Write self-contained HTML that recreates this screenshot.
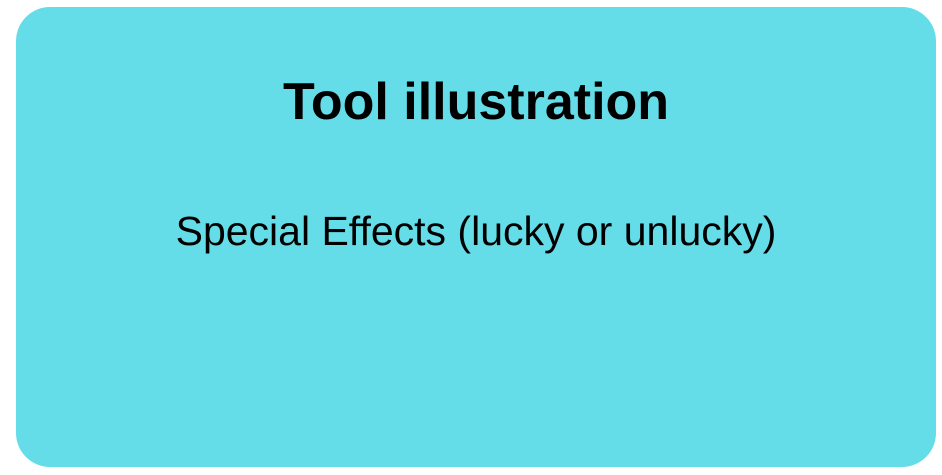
<!DOCTYPE html>
<html><head><style>
html,body{margin:0;padding:0;background:#fff;width:942px;height:475px;overflow:hidden}
.card{position:absolute;left:16px;top:7px;width:920px;height:460px;background:#65dde9;border-radius:34px;font-family:"Liberation Sans",sans-serif;color:#000}
h1{position:absolute;left:0;right:0;top:66px;margin:0;text-align:center;font-size:52px;font-weight:bold;line-height:58px}
p{position:absolute;left:0;right:0;top:201px;margin:0;text-align:center;font-size:41px;line-height:46px}
</style></head><body>
<div class="card"><h1>Tool illustration</h1><p>Special Effects (lucky or unlucky)</p></div>
</body></html>
